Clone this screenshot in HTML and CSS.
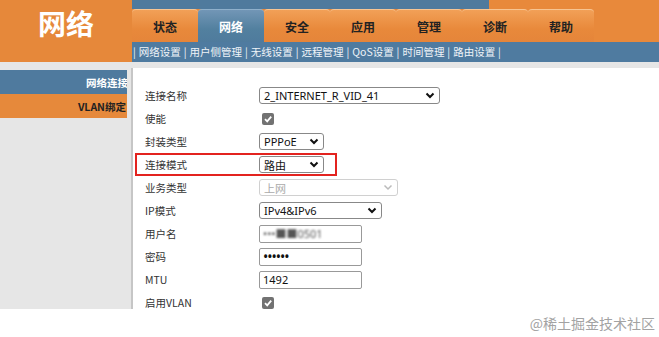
FILE: index.html
```html
<!DOCTYPE html>
<html lang="zh-CN">
<head>
  <meta charset="UTF-8">
  <title>网络</title>
  <link rel="stylesheet" href="styles.css">
</head>
<body>

<div class="header">
  <div class="brand">网络</div>
  <div class="nav">
    <div class="topline"><div class="topline-blue"></div></div>
    <div class="tabs">
      <div class="tab">状态</div>
      <div class="tab active">网络</div>
      <div class="tab">安全</div>
      <div class="tab">应用</div>
      <div class="tab">管理</div>
      <div class="tab">诊断</div>
      <div class="tab">帮助</div>
    </div>
    <div class="subnav">| 网络设置 | 用户侧管理 | 无线设置 | 远程管理 | QoS设置 | 时间管理 | 路由设置 |</div>
  </div>
</div>

<div class="main">
  <div class="sidebar">
    <div class="side-item blue"><span class="clip">网络连接</span></div>
    <div class="side-item orange">VLAN绑定</div>
  </div>
  <div class="content">
    <div class="row">
      <label>连接名称</label>
      <div class="select w181"><span>2_INTERNET_R_VID_41</span><svg width="10" height="7" viewBox="0 0 10 7"><path d="M1.5 1.5 L5 5 L8.5 1.5" fill="none" stroke="#111" stroke-width="2"/></svg></div>
    </div>
    <div class="row">
      <label>使能</label>
      <span class="check"><svg width="12" height="12" viewBox="0 0 12 12"><path d="M3 6.2 L5.2 8.4 L9.2 3.6" fill="none" stroke="#fff" stroke-width="1.8"/></svg></span>
    </div>
    <div class="row">
      <label>封装类型</label>
      <div class="select w65"><span>PPPoE</span><svg width="10" height="7" viewBox="0 0 10 7"><path d="M1.5 1.5 L5 5 L8.5 1.5" fill="none" stroke="#111" stroke-width="2"/></svg></div>
    </div>
    <div class="row marked">
      <label>连接模式</label>
      <div class="select w65"><span>路由</span><svg width="10" height="7" viewBox="0 0 10 7"><path d="M1.5 1.5 L5 5 L8.5 1.5" fill="none" stroke="#111" stroke-width="2"/></svg></div>
    </div>
    <div class="row">
      <label>业务类型</label>
      <div class="select w139 disabled"><span>上网</span><svg width="10" height="7" viewBox="0 0 10 7"><path d="M1.5 1.5 L5 5 L8.5 1.5" fill="none" stroke="#bbb" stroke-width="1.5"/></svg></div>
    </div>
    <div class="row">
      <label>IP模式</label>
      <div class="select w123"><span>IPv4&amp;IPv6</span><svg width="10" height="7" viewBox="0 0 10 7"><path d="M1.5 1.5 L5 5 L8.5 1.5" fill="none" stroke="#111" stroke-width="2"/></svg></div>
    </div>
    <div class="row">
      <label>用户名</label>
      <div class="input"><span class="blur">•••■■0501</span></div>
    </div>
    <div class="row">
      <label>密码</label>
      <div class="input dots">••••••</div>
    </div>
    <div class="row">
      <label>MTU</label>
      <div class="input">1492</div>
    </div>
    <div class="row">
      <label>启用VLAN</label>
      <span class="check"><svg width="12" height="12" viewBox="0 0 12 12"><path d="M3 6.2 L5.2 8.4 L9.2 3.6" fill="none" stroke="#fff" stroke-width="1.8"/></svg></span>
    </div>
  </div>
</div>

<div class="footer">@稀土掘金技术社区</div>

</body>
</html>
```

FILE: styles.css
```css
* {
  box-sizing: border-box;
}

body {
  margin: 0;
  background: #fff;
  font-family: "Noto Sans", "Noto Sans CJK SC", sans-serif;
  overflow: hidden;
}

.header {
  display: flex;
  height: 62px;
}

.brand {
  width: 132px;
  flex: none;
  background: #e6883a;
  color: #fff;
  font-family: "Noto Sans CJK SC", sans-serif;
  font-weight: bold;
  font-size: 28px;
  line-height: 34px;
  padding-top: 6px;
  text-align: center;
}

.nav {
  flex: 1;
  background: #e8893b;
  display: flex;
  flex-direction: column;
}

.topline {
  height: 9px;
}

.topline-blue {
  width: 357px;
  height: 9px;
  background: #4f7a9d;
}

.tabs {
  display: flex;
  height: 33px;
}

.tab {
  width: 66px;
  border-radius: 4px 4px 0 0;
  border-top: 1px solid #f7c593;
  background: linear-gradient(#f2a057, #e8893b 60%, #e5853a);
  font-family: "Noto Sans CJK SC", sans-serif;
  font-weight: bold;
  font-size: 12px;
  color: #222;
  display: flex;
  align-items: center;
  justify-content: center;
}

.tab.active {
  background: linear-gradient(#7296b6, #52809f 60%, #4f7b9d);
  border-top-color: #8fb0cb;
  color: #fff;
}

.subnav {
  height: 20px;
  background: #4f7ba0;
  color: #f0f4f8;
  font-family: "Noto Sans CJK SC", sans-serif;
  font-size: 10.5px;
  line-height: 20px;
  word-spacing: 0.6px;
  padding-left: 1px;
  white-space: nowrap;
}

.main {
  display: flex;
  height: 247px;
  background: #e6e6e6;
}

.sidebar {
  width: 127px;
  flex: none;
  padding-top: 8px;
  margin-right: 4px;
}

.side-item {
  height: 24px;
  display: flex;
  align-items: center;
  justify-content: flex-end;
  padding-right: 1px;
  overflow: hidden;
  white-space: nowrap;
  font-family: "Noto Sans CJK SC", sans-serif;
  font-weight: bold;
  font-size: 10.5px;
}

.side-item.blue {
  background: #4f7a9e;
  color: #fff;
}

.side-item.orange {
  background: #e6893b;
  color: #222;
}

.clip {
  margin-right: -2px;
}

.content {
  flex: 1;
  margin-top: 6px;
  background: #fff;
  border-left: 2px solid #c6c6c6;
  padding: 16px 0 0 12px;
  overflow: hidden;
}

.row {
  display: flex;
  align-items: center;
  height: 23px;
}

.row label {
  width: 114px;
  flex: none;
  font-family: "Noto Sans CJK SC", sans-serif;
  font-size: 10.5px;
  color: #333;
}

.row.marked {
  border: 2px solid #e3231f;
  margin-left: -10px;
  padding-left: 8px;
  width: 202px;
}

.select {
  height: 17px;
  border: 1px solid #888;
  border-radius: 3px;
  background: #fff;
  display: flex;
  align-items: center;
  justify-content: space-between;
  padding: 0 4px;
  font-size: 11px;
  color: #111;
}

.select.disabled {
  border-color: #d0d0d0;
  color: #aaa;
}

.w181 { width: 181px; }
.w139 { width: 139px; }
.w123 { width: 123px; }
.w65 { width: 65px; }

.check {
  width: 12px;
  height: 12px;
  margin-left: 3px;
  border-radius: 2px;
  background: #727272;
  display: flex;
}

.input {
  width: 103px;
  height: 18px;
  border: 1px solid #999;
  border-radius: 2px;
  padding: 0 3px;
  font-size: 11px;
  line-height: 16px;
  color: #111;
  overflow: hidden;
}

.input.dots {
  font-size: 14px;
  letter-spacing: -1px;
}

.blur {
  color: #555;
  filter: blur(0.8px);
}

.footer {
  height: 28px;
  text-align: right;
  padding-right: 4px;
  font-family: "Noto Sans CJK SC", sans-serif;
  font-size: 14px;
  line-height: 28px;
  color: #a3a3a3;
}
```
